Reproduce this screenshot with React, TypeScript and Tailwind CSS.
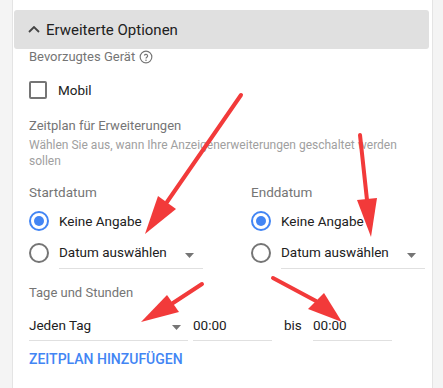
import React from "react";

const font = { fontFamily: "Roboto, 'Noto Sans', Arial, sans-serif" };

function Radio({ checked }: { checked?: boolean }) {
  return checked ? (
    <span className="w-[20px] h-[20px] rounded-full border-2 border-[#4285f4] flex items-center justify-center shrink-0">
      <span className="w-[10px] h-[10px] rounded-full bg-[#4285f4]" />
    </span>
  ) : (
    <span className="block w-[20px] h-[20px] rounded-full border-2 border-[#757575] shrink-0" />
  );
}

function Caret() {
  return (
    <svg width="9" height="5" viewBox="0 0 9 5" className="shrink-0 block">
      <path d="M0 0h9L4.5 5z" fill="#757575" />
    </svg>
  );
}

function DateColumn({ label }: { label: string }) {
  return (
    <div className="w-[174px]">
      <div className="text-[13.5px] leading-[20px] text-[#757575]">{label}</div>
      <div className="mt-[9px] flex items-center h-[20px]">
        <Radio checked />
        <span className="ml-[10px] text-[13.5px] leading-[20px] text-[#212121]">Keine Angabe</span>
      </div>
      <div className="mt-[8px] flex items-start">
        <div className="mt-[4px] shrink-0">
          <Radio />
        </div>
        <div className="ml-[10px] flex-1 h-[30px] pt-[3px] border-b border-[#e0e0e0] flex items-start justify-between pr-[9px]">
          <span className="text-[13.5px] leading-[20px] text-[#212121]">Datum auswählen</span>
          <span className="mt-[11px]">
            <Caret />
          </span>
        </div>
      </div>
    </div>
  );
}

function Arrow({ x1, y1, x2, y2, head }: { x1: number; y1: number; x2: number; y2: number; head: string }) {
  return (
    <g>
      <line x1={x1} y1={y1} x2={x2} y2={y2} stroke="#f23a3a" strokeWidth="4" strokeLinecap="round" />
      <polygon points={head} fill="#f23a3a" />
    </g>
  );
}

export default function App() {
  return (
    <div className="relative w-[443px] h-[388px] overflow-hidden bg-[#f4f4f4]" style={font}>
      <div className="ml-[12px] w-[421px] h-full bg-white border-x border-[#e4e4e4] pt-[10px] px-[1px]">
        {/* header */}
        <div className="w-[415px] h-[39px] bg-[#e0e0e0] rounded-[3px] flex items-center pl-[14px]">
          <svg width="12" height="7" viewBox="0 0 12 7" className="shrink-0">
            <path d="M1 6l5-5 5 5" fill="none" stroke="#444" strokeWidth="1.8" />
          </svg>
          <span className="ml-[6px] text-[15px] leading-[20px] text-[#212121]">Erweiterte Optionen</span>
        </div>

        <div className="pl-[15px]">
          {/* device */}
          <div className="flex items-center text-[13px] leading-[16px] text-[#757575]">
            <span>Bevorzugtes Gerät</span>
            <svg width="14" height="14" viewBox="0 0 24 24" className="ml-[4px]">
              <circle cx="12" cy="12" r="10" fill="none" stroke="#757575" strokeWidth="2" />
              <path d="M9.2 9.3a2.9 2.9 0 0 1 5.6 1c0 1.9-2.8 2.4-2.8 4.3" fill="none" stroke="#757575" strokeWidth="2" />
              <circle cx="12" cy="17.6" r="1.3" fill="#757575" />
            </svg>
          </div>
          <div className="mt-[15px] flex items-center h-[20px]">
            <span className="w-[18px] h-[18px] border-2 border-[#757575] rounded-[2px] shrink-0" />
            <span className="ml-[11px] text-[13.5px] leading-[20px] text-[#212121]">Mobil</span>
          </div>

          {/* schedule */}
          <div className="mt-[18px] text-[13px] leading-[16px] text-[#757575]">Zeitplan für Erweiterungen</div>
          <div className="mt-[3px] w-[395px] text-[12px] leading-[16px] text-[#a0a0a0]">
            Wählen Sie aus, wann Ihre Anzeigenerweiterungen geschaltet werden sollen
          </div>

          <div className="mt-[13px] flex gap-[48px]">
            <DateColumn label="Startdatum" />
            <DateColumn label="Enddatum" />
          </div>

          <div className="mt-[16px] text-[13px] leading-[16px] text-[#757575]">Tage und Stunden</div>
          <div className="mt-[10px] flex items-start text-[13.5px] leading-[20px] text-[#212121]">
            <div className="w-[159px] h-[30px] pt-[4px] border-b border-[#e0e0e0] flex items-start justify-between pr-[7px]">
              <span>Jeden Tag</span>
              <span className="mt-[10px]">
                <Caret />
              </span>
            </div>
            <div className="ml-[5px] w-[79px] h-[30px] pt-[4px] border-b border-[#e0e0e0]">00:00</div>
            <span className="w-[41px] pl-[12px] pt-[4px]">bis</span>
            <div className="w-[79px] h-[30px] pt-[4px] border-b border-[#e0e0e0]">00:00</div>
          </div>

          <div className="mt-[8px] text-[14px] leading-[20px] font-medium text-[#4285f4]">
            ZEITPLAN HINZUFÜGEN
          </div>
        </div>
      </div>

      {/* annotation arrows */}
      <svg className="absolute inset-0 pointer-events-none" width="443" height="388" viewBox="0 0 443 388">
        <Arrow x1={241} y1={95} x2={167} y2={202} head="145,234 158,196 176,209" />
        <Arrow x1={360} y1={135} x2={367} y2={200} head="371,237 357,200 377,198" />
        <Arrow x1={202} y1={284} x2={173} y2={303} head="141,322 167,295 179,312" />
        <Arrow x1={273} y1={278} x2={316} y2={301} head="342,322 308,309 324,293" />
      </svg>
    </div>
  );
}
